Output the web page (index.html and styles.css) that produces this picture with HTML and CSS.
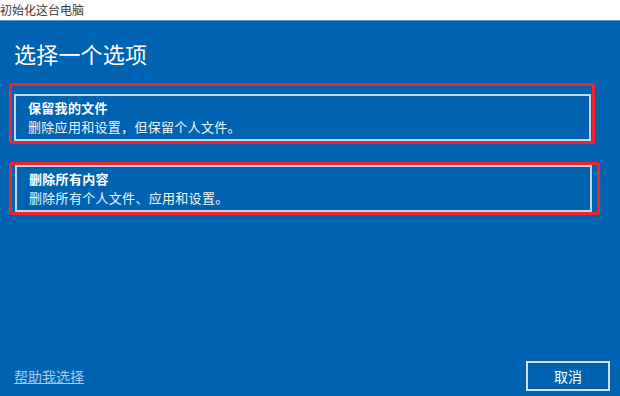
FILE: index.html
```html
<!DOCTYPE html>
<html lang="zh-CN">
<head>
<meta charset="utf-8">
<title>初始化这台电脑</title>
<link rel="stylesheet" href="styles.css">
</head>
<body>
<div class="window">
  <div class="titlebar"><span class="title">初始化这台电脑</span></div>
  <main class="content">
    <h1 class="heading">选择一个选项</h1>
    <div class="options">
      <div class="mark mark-first">
        <button class="option" type="button">
          <span class="option-title">保留我的文件</span>
          <span class="option-desc">删除应用和设置，但保留个人文件。</span>
        </button>
      </div>
      <div class="mark mark-second">
        <button class="option" type="button">
          <span class="option-title">删除所有内容</span>
          <span class="option-desc">删除所有个人文件、应用和设置。</span>
        </button>
      </div>
    </div>
    <div class="footer">
      <a class="help" href="#">帮助我选择</a>
      <button class="cancel" type="button">取消</button>
    </div>
  </main>
</div>
</body>
</html>
```

FILE: styles.css
```css
html, body {
  margin: 0;
  padding: 0;
}
body {
  width: 620px;
  height: 396px;
  overflow: hidden;
  font-family: "Noto Sans CJK SC", "Noto Sans", "Liberation Sans", sans-serif;
  background: #0063b1;
}
.window {
  display: flex;
  flex-direction: column;
  height: 396px;
}
.titlebar {
  height: 20px;
  background: #ffffff;
  border-bottom: 1px solid #5b9bd5;
  overflow: hidden;
  display: flex;
  align-items: center;
}
.title {
  margin-left: 0;
  font-size: 12px;
  line-height: 16px;
  color: #3a3a3a;
}
.content {
  flex: 1;
  display: flex;
  flex-direction: column;
  background: #0063b1;
  color: #ffffff;
  padding: 0 10px 5px 9px;
}
.heading {
  margin: 17px 0 0 5px;
  font-size: 22px;
  font-weight: normal;
  line-height: 30px;
  letter-spacing: 0.2px;
}
.options {
  display: flex;
  flex-direction: column;
  gap: 18px;
  margin-top: 15px;
}
.mark {
  border: 3px solid #f5222d;
  border-radius: 3px;
  display: flex;
}
.mark-first {
  width: 578px;
  padding: 8px 0 0 2px;
}
.mark-second {
  width: 581px;
  padding: 0 1px 0 3px;
}
.option {
  width: 577px;
  display: flex;
  flex-direction: column;
  align-items: flex-start;
  background: transparent;
  border: 2px solid rgba(225, 236, 248, 0.85);
  color: #ffffff;
  font-family: inherit;
  text-align: left;
  padding: 2px 12px 3px;
  cursor: pointer;
}
.option-title {
  font-size: 13px;
  font-weight: bold;
  line-height: 19px;
  letter-spacing: 0.3px;
}
.option-desc {
  font-size: 13px;
  line-height: 19px;
  letter-spacing: 0.3px;
  color: #f0f5fb;
}
.footer {
  margin-top: auto;
  display: flex;
  justify-content: space-between;
  align-items: center;
  padding-left: 5px;
}
.help {
  font-size: 14px;
  line-height: 18px;
  color: #a9c9ee;
  text-decoration: underline;
}
.cancel {
  width: 84px;
  height: 30px;
  background: transparent;
  border: 2px solid rgba(230, 240, 250, 0.9);
  color: #ffffff;
  font-family: inherit;
  font-size: 14px;
  padding: 0;
}
```
